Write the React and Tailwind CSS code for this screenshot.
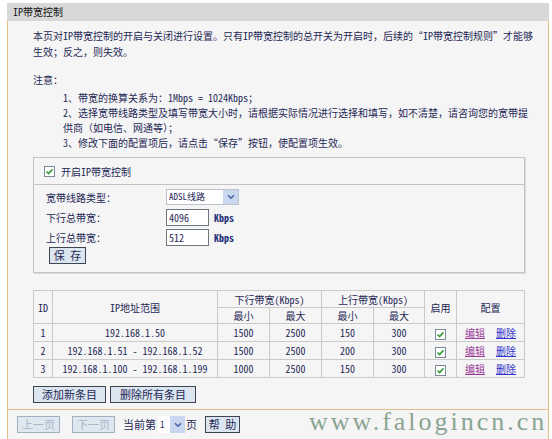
import React from "react";

const ink = "text-[#1f2856]";

function Check() {
  return (
    <span className="inline-flex h-[11px] w-[11px] items-center justify-center border border-[#7b8a98] bg-white">
      <svg width="9" height="9" viewBox="0 0 9 9">
        <path d="M1.5 4.5 L3.6 6.6 L7.5 2.2" fill="none" stroke="#2f9a2f" strokeWidth="1.6" />
      </svg>
    </span>
  );
}

function Chev() {
  return (
    <span className="flex h-full w-[15px] items-center justify-center bg-[#c9d8f0]">
      <svg width="8" height="6" viewBox="0 0 8 6">
        <path d="M1 1.2 L4 4.2 L7 1.2" fill="none" stroke="#4a64a8" strokeWidth="1.6" />
      </svg>
    </span>
  );
}

function Btn({ children, w, disabled }) {
  return (
    <span
      className={
        "inline-flex h-[17px] items-center justify-center border text-[11px] leading-none " +
        (disabled
          ? "border-[#9fb0c2] bg-[#dfe7ef] text-[#a7b8ca]"
          : "border-[#3e4450] bg-[#dbe5ef] text-[#1f2856]")
      }
      style={{ width: w }}
    >
      {children}
    </span>
  );
}

const rows = [
  ["1", "192.168.1.50", "1500", "2500", "150", "300"],
  ["2", "192.168.1.51 - 192.168.1.52", "1500", "2500", "200", "300"],
  ["3", "192.168.1.100 - 192.168.1.199", "1000", "2500", "150", "300"],
];

export default function App() {
  const td = "border border-[#cacaca] text-center p-0";
  return (
    <div className={"relative h-[439px] w-[552px] overflow-hidden bg-white font-['Noto_Sans_Mono_CJK_SC','Noto_Sans_CJK_SC',sans-serif] text-[10px] " + ink}>
      <div className="ml-[7px] mt-[3px] w-[542px]">
        <div className="h-[18px] bg-[#d8d8d8] pl-[6px] text-[10px] leading-[18px] text-[#111]">IP带宽控制</div>
        <div className="border-x border-b border-[#e3bf86] bg-[#f5f5f5]">
          <div className="border-b border-[#e3bf86] pl-[25px] pr-[23px]">
            <div className="pt-[7px] leading-[16px] whitespace-nowrap">
              <div>本页对IP带宽控制的开启与关闭进行设置。只有IP带宽控制的总开关为开启时，后续的“IP带宽控制规则”才能够</div>
              <div>生效；反之，则失效。</div>
            </div>
            <div className="mt-[12px] leading-[16px]">注意：</div>
            <div className="mt-[2px] pl-[30px] leading-[15px] whitespace-nowrap">
              <div>1、带宽的换算关系为：1Mbps = 1024Kbps；</div>
              <div>2、选择宽带线路类型及填写带宽大小时，请根据实际情况进行选择和填写，如不清楚，请咨询您的宽带提</div>
              <div>供商（如电信、网通等）；</div>
              <div>3、修改下面的配置项后，请点击“保存”按钮，使配置项生效。</div>
            </div>

            <div className="mt-[7px] w-[492px] border border-[#c4c4c4] shadow-[1px_1px_0_#dcdcdc]">
              <div className="flex h-[27px] items-center gap-[6px] border-b border-[#c4c4c4] pl-[10px] text-[10px]">
                <Check />
                <span>开启IP带宽控制</span>
              </div>
              <div className="pl-[12px] pt-[2px] pb-[8px]">
                <div className="flex h-[20px] items-center">
                  <span className="w-[120px]">宽带线路类型：</span>
                  <span className="flex h-[16px] w-[73px] items-center justify-between border border-[#b9c3cf] bg-white pl-[2px]">
                    <span className="text-[9px]">ADSL线路</span>
                    <Chev />
                  </span>
                </div>
                <div className="flex h-[20px] items-center">
                  <span className="w-[120px]">下行总带宽：</span>
                  <span className="flex h-[17px] w-[43px] items-center border border-[#6e7680] bg-white pl-[2px]">4096</span>
                  <span className="ml-[5px] font-bold text-[#26307a]">Kbps</span>
                </div>
                <div className="flex h-[20px] items-center">
                  <span className="w-[120px]">上行总带宽：</span>
                  <span className="flex h-[17px] w-[43px] items-center border border-[#6e7680] bg-white pl-[2px]">512</span>
                  <span className="ml-[5px] font-bold text-[#26307a]">Kbps</span>
                </div>
                <div className="pl-[3px]">
                  <Btn w={37}>保 存</Btn>
                </div>
              </div>
            </div>

            <table className="mt-[17px] w-[491px] table-fixed border-collapse border border-[#bdbdbd] text-[10px]">
              <colgroup>
                <col style={{ width: 19 }} />
                <col style={{ width: 165 }} />
                <col style={{ width: 52 }} />
                <col style={{ width: 52 }} />
                <col style={{ width: 52 }} />
                <col style={{ width: 51 }} />
                <col style={{ width: 32 }} />
                <col style={{ width: 68 }} />
              </colgroup>
              <tbody>
                <tr className="h-[17px]">
                  <td rowSpan={2} className={td}>ID</td>
                  <td rowSpan={2} className={td}>IP地址范围</td>
                  <td colSpan={2} className={td}>下行带宽(Kbps)</td>
                  <td colSpan={2} className={td}>上行带宽(Kbps)</td>
                  <td rowSpan={2} className={td}>启用</td>
                  <td rowSpan={2} className={td}>配置</td>
                </tr>
                <tr className="h-[15px]">
                  <td className={td}>最小</td>
                  <td className={td}>最大</td>
                  <td className={td}>最小</td>
                  <td className={td}>最大</td>
                </tr>
                {rows.map((r) => (
                  <tr key={r[0]} className="h-[18px]">
                    {r.map((c, i) => (
                      <td key={i} className={td}>{c}</td>
                    ))}
                    <td className={td}>
                      <span className="inline-flex align-middle"><Check /></span>
                    </td>
                    <td className={td}>
                      <span className="text-[#9a3c9a] underline">编辑</span>
                      <span className="ml-[11px] text-[#3434cc] underline">删除</span>
                    </td>
                  </tr>
                ))}
              </tbody>
            </table>

            <div className="mt-[8px] flex gap-[4px] pb-[6px]">
              <Btn w={73}>添加新条目</Btn>
              <Btn w={86}>删除所有条目</Btn>
            </div>
          </div>

          <div className="flex h-[29px] items-center pl-[9px]">
            <Btn w={43} disabled>上一页</Btn>
            <span className="ml-[12px]"><Btn w={43} disabled>下一页</Btn></span>
            <span className="ml-[8px] text-[11px]">当前第</span>
            <span className="ml-[2px] flex h-[17px] w-[27px] items-center justify-between bg-white pl-[2px]">
              <span className="text-[9px]">1</span>
              <Chev />
            </span>
            <span className="ml-[1px] text-[11px]">页</span>
            <span className="ml-[8px]"><Btn w={35}>帮 助</Btn></span>
          </div>
        </div>
      </div>

      <div className="absolute left-[309px] top-[407px] whitespace-nowrap font-['Liberation_Serif',serif] text-[26px] leading-[30px] tracking-[3px] text-[#6f9079] opacity-80">
        www.falogincn.cn
      </div>
    </div>
  );
}
